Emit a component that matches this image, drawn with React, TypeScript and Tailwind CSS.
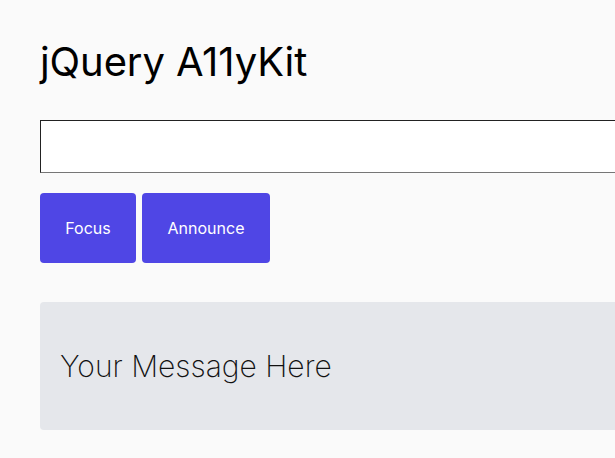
import React from "react";

export default function App() {
  return (
    <div
      className="min-h-screen w-full overflow-hidden bg-[#fafafa] pl-10 pt-[38px]"
      style={{ fontFamily: "Inter, 'Noto Sans', sans-serif" }}
    >
      <div className="w-[760px]">
        <h1 className="text-[40px] leading-[48px] font-normal tracking-[-0.1px] text-black">jQuery A11yKit</h1>
        <input
          type="text"
          aria-label="Message"
          className="mt-[34px] block h-[53px] w-full border border-t-[#222] border-l-[#222] border-r-[#767676] border-b-[#767676] bg-white outline-none"
        />
        <div className="mt-5 flex gap-[6px]">
          <button className="h-[70px] w-[96px] rounded-[4px] bg-[#4f46e5] text-[16px] font-normal text-white">
            Focus
          </button>
          <button className="h-[70px] w-[128px] rounded-[4px] bg-[#4f46e5] text-[16px] font-normal text-white">
            Announce
          </button>
        </div>
        <div className="mt-[39px] flex h-[128px] items-center rounded-[4px] bg-[#e5e7eb] pl-[20px]">
          <p className="text-[30px] font-[250] text-[#111]">Your Message Here</p>
        </div>
      </div>
    </div>
  );
}
